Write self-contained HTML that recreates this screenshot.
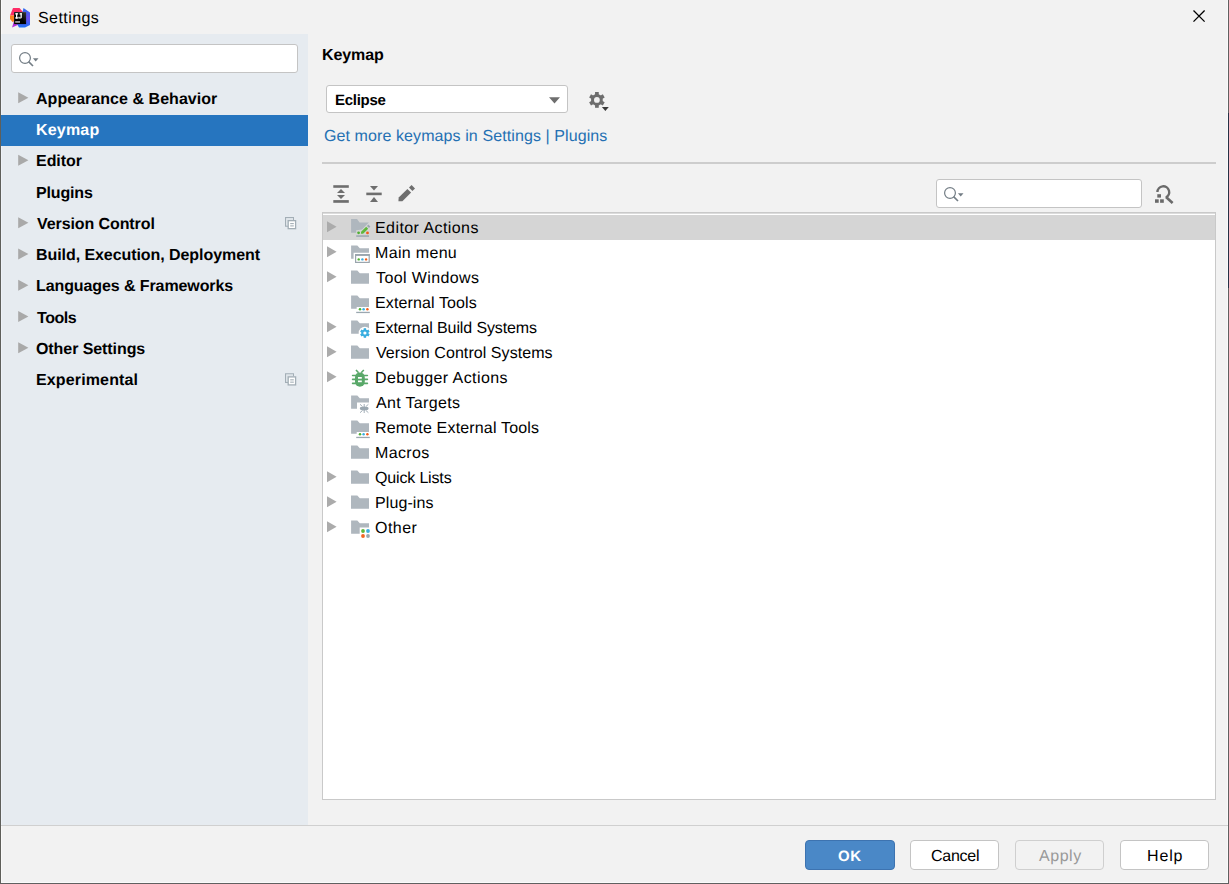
<!DOCTYPE html>
<html><head><meta charset="utf-8"><style>
html,body{margin:0;padding:0}
body{width:1229px;height:884px;position:relative;overflow:hidden;background:#f2f2f2;font-family:"Liberation Sans",sans-serif}
.t{position:absolute;font-size:16px;line-height:20px;white-space:nowrap;text-rendering:geometricPrecision}
.ic{position:absolute;overflow:visible}
.box{position:absolute;box-sizing:border-box}
</style></head><body>
<div class="box" style="left:1px;top:0;width:1px;height:883px;background:#fafafa"></div>
<div class="box" style="left:1227px;top:0;width:1px;height:883px;background:#fafafa"></div>
<div class="box" style="left:1px;top:882px;width:1227px;height:1px;background:#fafafa"></div>
<div class="box" style="left:0;top:0;width:1px;height:884px;background:#5f5f5a"></div>
<div class="box" style="left:1228px;top:0;width:1px;height:884px;background:#606060"></div>
<div class="box" style="left:1228px;top:113px;width:1px;height:175px;background:#263246"></div>
<div class="box" style="left:0;top:883px;width:1229px;height:1px;background:#606060"></div>
<!-- sidebar -->
<div class="box" style="left:1px;top:34px;width:307px;height:791px;background:#e6ebf0"></div>
<div class="box" style="left:1px;top:34px;width:1px;height:791px;background:#eef2f8"></div>
<div class="box" style="left:1px;top:115px;width:307px;height:31.25px;background:#2675bf"></div>
<div class="box" style="left:11px;top:44px;width:287px;height:29px;background:#fff;border:1px solid #c4c4c4;border-radius:3px"></div>
<!-- bottom separator -->
<div class="box" style="left:1px;top:825px;width:1227px;height:1px;background:#d0d0d0"></div>
<!-- combo -->
<div class="box" style="left:326px;top:85px;width:242px;height:28px;background:#fff;border:1px solid #c4c4c4;border-radius:3px"></div>
<!-- separator -->
<div class="box" style="left:322px;top:162px;width:894px;height:2px;background:#cdcdcd"></div>
<!-- search -->
<div class="box" style="left:936px;top:179px;width:206px;height:29px;background:#fff;border:1px solid #c4c4c4;border-radius:3px"></div>
<!-- tree -->
<div class="box" style="left:322px;top:212px;width:894px;height:588px;background:#fff;border:1px solid #c9c9c9"></div>
<div class="box" style="left:323px;top:213px;width:892px;height:1px;background:#dcdcdc"></div>
<div class="box" style="left:323px;top:215px;width:892px;height:25px;background:#d5d5d5"></div>
<!-- buttons -->
<div class="box" style="left:805px;top:840px;width:90px;height:30px;background:#4a88c7;border:1px solid #3d73b0;border-radius:4px"></div>
<div class="box" style="left:910px;top:840px;width:89px;height:30px;background:#fff;border:1px solid #c4c4c4;border-radius:4px"></div>
<div class="box" style="left:1015px;top:840px;width:89px;height:30px;background:#f2f2f2;border:1px solid #cfcfcf;border-radius:4px"></div>
<div class="box" style="left:1120px;top:840px;width:89px;height:30px;background:#fff;border:1px solid #c4c4c4;border-radius:4px"></div>
<svg class="ic" style="left:8px;top:6px" width="24" height="24" viewBox="8 6 24 24">
<defs>
<linearGradient id="lgr" x1="0" y1="0" x2="1" y2="1"><stop offset="0" stop-color="#ff2d6e"/><stop offset="1" stop-color="#fe2857"/></linearGradient>
<linearGradient id="lgb" x1="0" y1="0" x2="0" y2="1"><stop offset="0" stop-color="#2a6ef0"/><stop offset="0.5" stop-color="#6b4cf0"/><stop offset="1" stop-color="#1f72f5"/></linearGradient>
</defs>
<polygon points="13,8 19.5,8 23,12 14,12 14,15.5 10,15.5" fill="url(#lgr)"/>
<polygon points="10,15.5 14,15.5 14,21.5 12.5,22 10,19" fill="#fc801d"/>
<polygon points="14,21 14,24 20,24 12,27.5" fill="#b22fd9"/>
<polygon points="23.5,8 30,12.5 30,25 25,27.5 19,27.5 17,24 26,24 26,12 22.5,12" fill="url(#lgb)"/>
<defs><linearGradient id="lgk" x1="1" y1="0" x2="0" y2="1"><stop offset="0" stop-color="#3a3a3a"/><stop offset="0.5" stop-color="#000"/></linearGradient></defs><rect x="14.1" y="12.1" width="12" height="12" fill="url(#lgk)"/>
<rect x="15.2" y="13.2" width="2.9" height="1.3" fill="#fff"/><rect x="16" y="13.2" width="1.3" height="5.4" fill="#fff"/><rect x="15.2" y="17.3" width="2.9" height="1.3" fill="#fff"/>
<rect x="19.6" y="13.2" width="2.2" height="1.3" fill="#fff"/><rect x="20.5" y="13.2" width="1.3" height="4.4" fill="#fff"/><path d="M21.8 17.3 Q21.8 18.6 20.4 18.6 L18.4 18.6 L18.4 16.8 L19.5 16.8 L19.5 17.4 L20.5 17.4 L20.5 17.3 Z" fill="#fff"/>
<rect x="15.2" y="21.3" width="4.8" height="1.3" fill="#d8d8d8"/>
</svg><svg class="ic" style="left:1188px;top:6px" width="20" height="20" viewBox="1188 6 20 20"><path d="M1193.5 10.5 L1204.6 21.6 M1204.6 10.5 L1193.5 21.6" stroke="#000" stroke-width="1.3" fill="none"/></svg><svg class="ic" style="left:17.1px;top:49.7px" width="24" height="18" viewBox="17.1 49.7 24 18"><circle cx="25.1" cy="57.7" r="5.4" stroke="#737d85" stroke-width="1.2" fill="none"/><path d="M28.700000000000003 61.300000000000004 L33.1 65.7" stroke="#737d85" stroke-width="1.6"/><polygon points="33.0,58.0 38.6,58.0 35.8,61.2" fill="#737d85"/></svg><svg class="ic" style="left:942.15px;top:184.5px" width="24" height="18" viewBox="942.15 184.5 24 18"><circle cx="950.15" cy="192.5" r="5.4" stroke="#737d85" stroke-width="1.2" fill="none"/><path d="M953.75 196.1 L958.15 200.5" stroke="#737d85" stroke-width="1.6"/><polygon points="958.05,192.8 963.65,192.8 960.85,196.0" fill="#737d85"/></svg><svg class="ic" style="left:545px;top:94px" width="18" height="12" viewBox="545 94 18 12"><polygon points="549,97.2 560,97.2 554.5,103.6" fill="#6e6e6e"/></svg><svg class="ic" style="left:586px;top:88px" width="26" height="26" viewBox="586 88 26 26"><circle cx="596.9" cy="99.9" r="5.9" fill="#6e6e6e"/><rect x="595.05" y="92.0" width="3.7" height="4" transform="rotate(0 596.9 99.9)" fill="#6e6e6e"/><rect x="595.05" y="92.0" width="3.7" height="4" transform="rotate(60 596.9 99.9)" fill="#6e6e6e"/><rect x="595.05" y="92.0" width="3.7" height="4" transform="rotate(120 596.9 99.9)" fill="#6e6e6e"/><rect x="595.05" y="92.0" width="3.7" height="4" transform="rotate(180 596.9 99.9)" fill="#6e6e6e"/><rect x="595.05" y="92.0" width="3.7" height="4" transform="rotate(240 596.9 99.9)" fill="#6e6e6e"/><rect x="595.05" y="92.0" width="3.7" height="4" transform="rotate(300 596.9 99.9)" fill="#6e6e6e"/><circle cx="596.9" cy="99.9" r="2.9" fill="#f2f2f2"/><polygon points="601.9,107.1 608.8,107.1 605.35,110.9" fill="#3a3a3a"/></svg><svg class="ic" style="left:330px;top:182px" width="90" height="24" viewBox="330 182 90 24"><rect x="333.3" y="185.2" width="15.5" height="2.6" fill="#6e6e6e"/><polygon points="337,193.1 345,193.1 341,189" fill="#6e6e6e"/><polygon points="337,195 345,195 341,198.9" fill="#6e6e6e"/><rect x="333.3" y="200.1" width="15.5" height="2.7" fill="#6e6e6e"/><polygon points="370,186 378,186 374,190.6" fill="#6e6e6e"/><rect x="366.3" y="192.6" width="15.4" height="2.6" fill="#6e6e6e"/><polygon points="370,201.9 378,201.9 374,197" fill="#6e6e6e"/><polygon points="398.4,201.3 398.7,197.6 407.4,189 411.1,192.5 402.4,201.3" fill="#6e6e6e"/><polygon points="409,187.4 411.6,185 415,188.4 412.4,191" fill="#6e6e6e"/></svg><svg class="ic" style="left:1150px;top:182px" width="28" height="24" viewBox="1150 182 28 24"><path d="M1157.40 191.99 A5.9 5.9 0 1 1 1165.89 197.50" stroke="#6a6a6a" stroke-width="2.4" fill="none"/><path d="M1166 197 L1172.6 203" stroke="#6a6a6a" stroke-width="2.6"/><rect x="1157.3" y="194.2" width="3.7" height="3.4" fill="#6a6a6a"/><rect x="1155" y="199.3" width="3.7" height="3.5" fill="#6a6a6a"/><rect x="1160.1" y="199.3" width="3.7" height="3.5" fill="#6a6a6a"/></svg><svg class="ic" style="left:16px;top:89px" width="14" height="16" viewBox="16 89 14 16"><polygon points="18.2,92.35 28.4,97.85 18.2,103.35" fill="#a9a9a9"/></svg><svg class="ic" style="left:16px;top:152px" width="14" height="16" viewBox="16 152 14 16"><polygon points="18.2,154.85 28.4,160.35 18.2,165.85" fill="#a9a9a9"/></svg><svg class="ic" style="left:16px;top:214px" width="14" height="16" viewBox="16 214 14 16"><polygon points="18.2,217.35 28.4,222.85 18.2,228.35" fill="#a9a9a9"/></svg><svg class="ic" style="left:16px;top:246px" width="14" height="16" viewBox="16 246 14 16"><polygon points="18.2,248.6 28.4,254.1 18.2,259.6" fill="#a9a9a9"/></svg><svg class="ic" style="left:16px;top:277px" width="14" height="16" viewBox="16 277 14 16"><polygon points="18.2,279.85 28.4,285.35 18.2,290.85" fill="#a9a9a9"/></svg><svg class="ic" style="left:16px;top:308px" width="14" height="16" viewBox="16 308 14 16"><polygon points="18.2,311.1 28.4,316.6 18.2,322.1" fill="#a9a9a9"/></svg><svg class="ic" style="left:16px;top:339px" width="14" height="16" viewBox="16 339 14 16"><polygon points="18.2,342.35 28.4,347.85 18.2,353.35" fill="#a9a9a9"/></svg><svg class="ic" style="left:282px;top:212px" width="18" height="20" viewBox="282 212 18 20"><path d="M285 217.05 H294 V220.05 H293 V218.25 H286.2 V225.45000000000002 H288 V226.85000000000002 H285 Z" fill="#a3aeb6"/><rect x="286.2" y="218.25" width="6.8" height="7.2" fill="#dfe5ea"/><rect x="288.2" y="220.65" width="7.4" height="8" fill="#fff" stroke="#a3aeb6" stroke-width="1.3"/><rect x="290.2" y="223.05" width="3.6" height="1.1" fill="#a3aeb6"/><rect x="290.2" y="225.35000000000002" width="3.6" height="1.1" fill="#a3aeb6"/></svg><svg class="ic" style="left:282px;top:369px" width="18" height="20" viewBox="282 369 18 20"><path d="M285 373.3 H294 V376.3 H293 V374.5 H286.2 V381.7 H288 V383.1 H285 Z" fill="#a3aeb6"/><rect x="286.2" y="374.5" width="6.8" height="7.2" fill="#dfe5ea"/><rect x="288.2" y="376.90000000000003" width="7.4" height="8" fill="#fff" stroke="#a3aeb6" stroke-width="1.3"/><rect x="290.2" y="379.3" width="3.6" height="1.1" fill="#a3aeb6"/><rect x="290.2" y="381.6" width="3.6" height="1.1" fill="#a3aeb6"/></svg><svg class="ic" style="left:325px;top:219px" width="14" height="16" viewBox="325 219 14 16"><polygon points="327,221.2 336.6,226.7 327,232.3" fill="#ababab"/></svg><svg class="ic" style="left:340px;top:215px" width="40" height="25" viewBox="340 215 40 25"><path d="M351.1 219.1 H357 L359.6 222.6 H368.9 L362 229.6 L356.2 230.3 V232.7 H351.1 Z" fill="#afb7be"/><polygon points="360.9,233.8 361.1,231.7 366.2,226.7 368.2,228.8 363.1,233.8" fill="#5fb83c"/><polygon points="367,225.9 368.3,224.6 370.3,226.6 369,227.9" fill="#9aa7b0"/><circle cx="358.6" cy="232.8" r="1.4" fill="#4fb033"/><circle cx="367.5" cy="232.9" r="1.4" fill="#f25c19"/><rect x="356.2" y="235.3" width="12.8" height="1.5" fill="#9aa7b0"/></svg><svg class="ic" style="left:325px;top:244px" width="14" height="16" viewBox="325 244 14 16"><polygon points="327,246.2 336.6,251.7 327,257.3" fill="#ababab"/></svg><svg class="ic" style="left:340px;top:240px" width="40" height="25" viewBox="340 240 40 25"><path d="M351.1 245.5 H357.3 L359.8 248.2 H369 V252.8 H353.6 V258.8 H351.1 Z" fill="#afb7be"/><rect x="355.6" y="254.7" width="13.6" height="7.7" fill="#fff" stroke="#9aa5ad" stroke-width="1.2"/><rect x="355" y="254.1" width="14.8" height="1.8" fill="#9aa5ad"/><circle cx="358.7" cy="259.4" r="1.2" fill="#4fb033"/><circle cx="362.4" cy="259.4" r="1.2" fill="#3aaee0"/><circle cx="366.1" cy="259.4" r="1.2" fill="#f25c19"/></svg><svg class="ic" style="left:325px;top:269px" width="14" height="16" viewBox="325 269 14 16"><polygon points="327,271.2 336.6,276.7 327,282.3" fill="#ababab"/></svg><svg class="ic" style="left:340px;top:265px" width="40" height="25" viewBox="340 265 40 25"><path d="M351 270.5 H357.3 L359.8 273.2 H369 V283.8 H351 Z" fill="#afb7be"/></svg><svg class="ic" style="left:340px;top:290px" width="40" height="25" viewBox="340 290 40 25"><path d="M351.1 295.5 H357.3 L359.8 298.2 H369 V307.0 H356.7 V308.8 H351.1 Z" fill="#afb7be"/><circle cx="360" cy="309.3" r="1.25" fill="#4fb033"/><circle cx="363.6" cy="309.3" r="1.25" fill="#3aaee0"/><circle cx="367.4" cy="309.3" r="1.25" fill="#f25c19"/><rect x="356.2" y="311.8" width="13.6" height="1.3" fill="#9aa7b0"/></svg><svg class="ic" style="left:325px;top:319px" width="14" height="16" viewBox="325 319 14 16"><polygon points="327,321.2 336.6,326.7 327,332.3" fill="#ababab"/></svg><svg class="ic" style="left:340px;top:315px" width="40" height="25" viewBox="340 315 40 25"><defs><mask id="m4"><rect x="340" y="315" width="40" height="25" fill="#fff"/><circle cx="364.9" cy="333" r="6.2" fill="#000"/></mask></defs><path d="M351.1 320.5 H357.3 L359.8 323.2 H369 V333.8 H351.1 Z" fill="#afb7be" mask="url(#m4)"/><circle cx="364.9" cy="333" r="3.6" fill="#3aaee0"/><rect x="363.7" y="328.2" width="2.4" height="2.6" transform="rotate(0 364.9 333)" fill="#3aaee0"/><rect x="363.7" y="328.2" width="2.4" height="2.6" transform="rotate(60 364.9 333)" fill="#3aaee0"/><rect x="363.7" y="328.2" width="2.4" height="2.6" transform="rotate(120 364.9 333)" fill="#3aaee0"/><rect x="363.7" y="328.2" width="2.4" height="2.6" transform="rotate(180 364.9 333)" fill="#3aaee0"/><rect x="363.7" y="328.2" width="2.4" height="2.6" transform="rotate(240 364.9 333)" fill="#3aaee0"/><rect x="363.7" y="328.2" width="2.4" height="2.6" transform="rotate(300 364.9 333)" fill="#3aaee0"/><circle cx="364.9" cy="333" r="1.6" fill="#fff"/></svg><svg class="ic" style="left:325px;top:344px" width="14" height="16" viewBox="325 344 14 16"><polygon points="327,346.2 336.6,351.7 327,357.3" fill="#ababab"/></svg><svg class="ic" style="left:340px;top:340px" width="40" height="25" viewBox="340 340 40 25"><path d="M351 345.5 H357.3 L359.8 348.2 H369 V358.8 H351 Z" fill="#afb7be"/></svg><svg class="ic" style="left:325px;top:369px" width="14" height="16" viewBox="325 369 14 16"><polygon points="327,371.2 336.6,376.7 327,382.3" fill="#ababab"/></svg><svg class="ic" style="left:340px;top:365px" width="40" height="25" viewBox="340 365 40 25"><rect x="355" y="372.4" width="9.8" height="14.4" rx="4.9" ry="5" fill="#59a869"/><path d="M356 370 L358.6 372.8 M363.8 370 L361.2 372.8" stroke="#59a869" stroke-width="1.6"/><path d="M352.6 375.5 H367.4 M352.6 379.4 H367.4 M352.6 383.4 H367.4" stroke="#59a869" stroke-width="1.6" stroke-linecap="round"/><rect x="358" y="377" width="3.8" height="1.7" fill="#fff"/><rect x="358" y="380.5" width="3.8" height="1.7" fill="#fff"/></svg><svg class="ic" style="left:340px;top:390px" width="40" height="25" viewBox="340 390 40 25"><path d="M351.1 395.5 H357.3 L359.8 398.2 H369 V402.6 H357 V408.8 H351.1 Z" fill="#afb7be"/><ellipse cx="364.2" cy="408.5" rx="4.4" ry="1.9" fill="#9aa7b0"/><path d="M360 404.3 L362.5 406.5 M368.4 404.3 L365.9 406.5 M360 412.7 L362.5 410.5 M368.4 412.7 L365.9 410.5 M364.2 404 V413" stroke="#9aa7b0" stroke-width="0.9"/></svg><svg class="ic" style="left:340px;top:415px" width="40" height="25" viewBox="340 415 40 25"><path d="M351.1 420.5 H357.3 L359.8 423.2 H369 V432.0 H356.7 V433.8 H351.1 Z" fill="#afb7be"/><circle cx="360" cy="434.3" r="1.25" fill="#4fb033"/><circle cx="363.6" cy="434.3" r="1.25" fill="#3aaee0"/><circle cx="367.4" cy="434.3" r="1.25" fill="#f25c19"/><rect x="356.2" y="436.8" width="13.6" height="1.3" fill="#9aa7b0"/></svg><svg class="ic" style="left:340px;top:440px" width="40" height="25" viewBox="340 440 40 25"><path d="M351 445.5 H357.3 L359.8 448.2 H369 V458.8 H351 Z" fill="#afb7be"/></svg><svg class="ic" style="left:325px;top:469px" width="14" height="16" viewBox="325 469 14 16"><polygon points="327,471.2 336.6,476.7 327,482.3" fill="#ababab"/></svg><svg class="ic" style="left:340px;top:465px" width="40" height="25" viewBox="340 465 40 25"><path d="M351 470.5 H357.3 L359.8 473.2 H369 V483.8 H351 Z" fill="#afb7be"/></svg><svg class="ic" style="left:325px;top:494px" width="14" height="16" viewBox="325 494 14 16"><polygon points="327,496.2 336.6,501.7 327,507.3" fill="#ababab"/></svg><svg class="ic" style="left:340px;top:490px" width="40" height="25" viewBox="340 490 40 25"><path d="M351 495.5 H357.3 L359.8 498.2 H369 V508.8 H351 Z" fill="#afb7be"/></svg><svg class="ic" style="left:325px;top:519px" width="14" height="16" viewBox="325 519 14 16"><polygon points="327,521.2 336.6,526.7 327,532.3" fill="#ababab"/></svg><svg class="ic" style="left:340px;top:515px" width="40" height="25" viewBox="340 515 40 25"><path d="M351.1 520.5 H357.3 L359.8 523.2 H369 V527.6 H359.7 V533.8 H351.1 Z" fill="#afb7be"/><circle cx="363" cy="531" r="1.9" fill="#5fb83c"/><circle cx="368" cy="531" r="1.9" fill="#3aaee0"/><circle cx="363" cy="536" r="1.9" fill="#f26522"/><circle cx="368" cy="536" r="1.9" fill="#9aa7b0"/></svg>
<div class="t" style="left:38px;top:9px;font-weight:normal;color:#000;letter-spacing:0.429px">Settings</div><div class="t" style="left:36px;top:90px;font-weight:bold;color:#000;letter-spacing:0.040px">Appearance &amp; Behavior</div><div class="t" style="left:36px;top:121px;font-weight:bold;color:#fff;letter-spacing:0.180px">Keymap</div><div class="t" style="left:36px;top:152px;font-weight:bold;color:#000;letter-spacing:-0.040px">Editor</div><div class="t" style="left:36px;top:184px;font-weight:bold;color:#000;letter-spacing:-0.150px">Plugins</div><div class="t" style="left:37px;top:215px;font-weight:bold;color:#000;letter-spacing:-0.093px">Version Control</div><div class="t" style="left:36px;top:246px;font-weight:bold;color:#000;letter-spacing:-0.067px">Build, Execution, Deployment</div><div class="t" style="left:36px;top:277px;font-weight:bold;color:#000;letter-spacing:-0.095px">Languages &amp; Frameworks</div><div class="t" style="left:37px;top:309px;font-weight:bold;color:#000;letter-spacing:-0.450px">Tools</div><div class="t" style="left:36px;top:340px;font-weight:bold;color:#000;letter-spacing:-0.077px">Other Settings</div><div class="t" style="left:36px;top:371px;font-weight:bold;color:#000;letter-spacing:0.136px">Experimental</div><div class="t" style="left:322px;top:46px;font-weight:bold;color:#000;letter-spacing:-0.080px">Keymap</div><div class="t" style="left:335px;top:91px;font-size:15px;font-weight:bold;color:#000;letter-spacing:-0.267px">Eclipse</div><div class="t" style="left:324px;top:127px;font-weight:normal;color:#2470b3;letter-spacing:0.095px">Get more keymaps in Settings | Plugins</div><div class="t" style="left:375px;top:219px;font-weight:normal;color:#000;letter-spacing:0.431px">Editor Actions</div><div class="t" style="left:375px;top:244px;font-weight:normal;color:#000;letter-spacing:0.325px">Main menu</div><div class="t" style="left:376px;top:269px;font-weight:normal;color:#000;letter-spacing:0.382px">Tool Windows</div><div class="t" style="left:375px;top:294px;font-weight:normal;color:#000;letter-spacing:0.115px">External Tools</div><div class="t" style="left:375px;top:319px;font-weight:normal;color:#000;letter-spacing:-0.119px">External Build Systems</div><div class="t" style="left:376px;top:344px;font-weight:normal;color:#000;letter-spacing:0.064px">Version Control Systems</div><div class="t" style="left:375px;top:369px;font-weight:normal;color:#000;letter-spacing:0.413px">Debugger Actions</div><div class="t" style="left:376px;top:394px;font-weight:normal;color:#000;letter-spacing:0.330px">Ant Targets</div><div class="t" style="left:375px;top:419px;font-weight:normal;color:#000;letter-spacing:0.165px">Remote External Tools</div><div class="t" style="left:375px;top:444px;font-weight:normal;color:#000;letter-spacing:0.360px">Macros</div><div class="t" style="left:375px;top:469px;font-weight:normal;color:#000;letter-spacing:-0.160px">Quick Lists</div><div class="t" style="left:375px;top:494px;font-weight:normal;color:#000;letter-spacing:0.100px">Plug-ins</div><div class="t" style="left:375px;top:519px;font-weight:normal;color:#000;letter-spacing:0.475px">Other</div><div class="t" style="left:838px;top:847px;font-size:15px;font-weight:bold;color:#fff;letter-spacing:0.700px">OK</div><div class="t" style="left:931px;top:847px;font-weight:normal;color:#000;letter-spacing:-0.260px">Cancel</div><div class="t" style="left:1039px;top:847px;font-weight:normal;color:#999;letter-spacing:0.550px">Apply</div><div class="t" style="left:1147px;top:847px;font-weight:normal;color:#000;letter-spacing:0.867px">Help</div>
</body></html>
